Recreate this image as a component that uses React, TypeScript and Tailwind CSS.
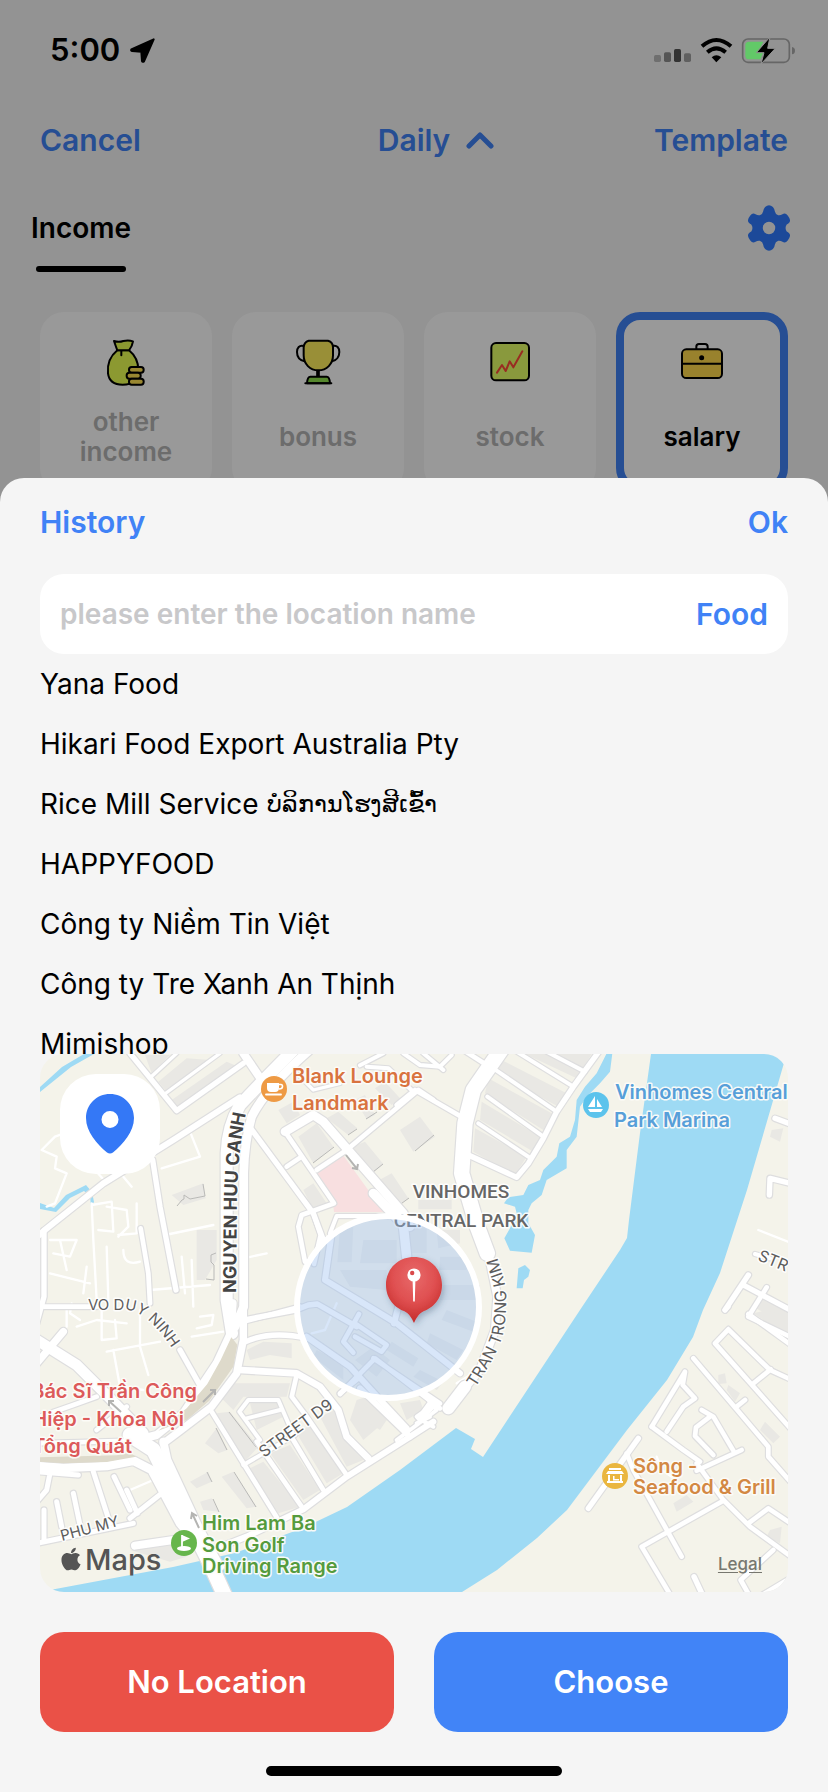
import React from "react";
import { FaApple } from "react-icons/fa";

type Road = [path: string, width: number];

interface Tile {
  x: number;
  y: number;
  buildings: string[];
  roads: Road[];
  lanes: string[];
}

/* Each tile is drawn at three units per map pixel, from its own origin. */
const tiles: Tile[] = [
  {
    x: 30,
    y: 1040,
    buildings: [
      "M345 45H420L365 100Z",
      "M385 125L470 55L540 60L410 155Z",
      "M425 180L590 65L625 80L445 205Z",
      "M425 465L520 430L527 475L460 495Z",
      "M500 570H560V660L525 720H500Z",
      "M805 290L860 250L910 320L850 370Z",
      "M890 235L925 215L982 265L955 285Z",
      "M968 320L1005 305L1060 372L1030 398Z",
      "M1048 420L1085 400L1135 475L1105 497Z",
      "M820 450L850 430L890 490L850 510Z",
      "M975 180L1005 165L1035 225L1010 238Z",
      "M1035 145L1065 125L1110 175L1085 195Z",
      "M745 210L790 185L810 225L770 250Z",
    ],
    roads: [
      ["M800 20Q700 120 630 195Q592 260 590 340V780L606 880", 36],
      ["M850 20Q710 140 665 230Q644 300 641 400V800L615 860", 26],
      ["M20 592L42 572L220 430L430 300L630 172", 18],
      ["M42 572V770L20 850", 16],
      ["M42 800H200", 14],
      ["M368 360L390 500L438 750", 16],
      ["M332 565L355 700L360 790", 14],
      ["M300 40L440 212L640 70", 16],
      ["M362 112L440 40M400 165L570 40", 10],
      ["M640 40L700 128", 24],
      ["M660 262L850 520L880 600", 16],
      ["M770 380L815 350M860 390L950 330L1165 150L1210 180", 14],
      ["M765 275L850 225L880 245L1120 520L1140 560", 26],
      ["M765 275L912 490L815 525L805 560L825 665", 14],
      ["M850 520L872 585L852 672", 14],
      ["M990 76L1060 40M1010 80L1075 85L1150 155M1180 40L1240 90", 12],
      ["M640 845L810 800", 14],
      ["M800 100L850 150L930 130", 10],
    ],
    lanes: [
      "M35 330L75 290L130 270M35 330L80 350L75 385L110 400L75 490L50 500",
      "M200 395L230 430M280 410L305 440",
      "M480 275L510 350L395 385",
      "M185 490L190 600L200 780M185 495L245 485L250 575L205 570M230 500L290 510L295 560L265 590",
      "M320 490V580L265 585M60 600L140 600L120 650L70 640M60 700L180 730M90 600L110 690M230 620L235 780",
      "M280 630Q280 680 330 665M405 585L550 555M640 655L710 640M455 650L465 760M485 660L490 800M360 750L540 735",
      "M110 810V860M160 760L170 680M140 860L200 840L290 850",
    ],
  },
  {
    x: 400,
    y: 1040,
    buildings: [
      "M305 60L510 165L475 200L285 95Z",
      "M265 115L455 220L430 270L255 160Z",
      "M245 185L420 290L400 335L240 240Z",
      "M225 265L380 350L345 405L220 335Z",
      "M375 42H575L530 115Z",
      "M0 270L60 230L105 290L40 335Z",
      "M55 480L155 480V508H55Z",
      "M1115 270L1150 265L1140 305L1110 290Z",
      "M1060 800L1100 770L1164 800V860Z",
    ],
    roads: [
      ["M310 20L220 150L195 250L185 400L232 560L262 640", 46],
      ["M600 30L520 140L470 215L430 295L385 370L350 412L205 345", 16],
      ["M350 35L520 140M280 85L470 215M262 170L430 290M235 250L388 352M440 35L555 95", 12],
      ["M190 30L260 75", 14],
      ["M-10 195L45 150L180 228", 14],
      ["M10 40L60 75L120 80L155 45", 12],
      ["M1125 235L1180 255M1108 465L1110 415L1180 432", 16],
      ["M975 810L1045 705M1030 735L1180 815", 16],
      ["M1100 742L1045 830L1180 895", 14],
      ["M1065 642L1110 655", 12],
    ],
    lanes: ["M1075 570L1164 605"],
  },
  {
    x: 30,
    y: 1310,
    buildings: [
      "M650 120L700 95L785 100V145L720 135L660 150Z",
      "M600 220H780L770 260H640L610 300L570 260Z",
      "M560 310L600 305L685 410L640 460Z",
      "M525 400L560 355L592 420L565 430Z",
      "M480 515L535 485L545 515L500 535Z",
      "M575 500L610 485L680 590L650 595Z",
      "M510 575L545 565L567 605L520 600Z",
      "M650 480L700 455L810 590L745 610Z",
      "M720 430L780 405L870 540L820 570Z",
      "M800 370L850 340L940 490L890 520Z",
      "M870 320L915 300L1000 450L950 470Z",
      "M980 270L1010 260L1070 330L1000 390L960 330Z",
      "M660 280L740 275L760 320L680 360Z",
      "M300 720L430 700L470 740L420 755Z",
    ],
    roads: [
      ["M608 -20L602 70L560 160L520 220L460 310L380 375L340 385", 24],
      ["M640 -20V90L620 190L545 290L440 370L400 400", 22],
      ["M100 65L20 160", 22],
      ["M20 90L140 165L240 265L340 370", 32],
      ["M300 375L370 420L440 560L540 760L590 870", 44],
      ["M400 395L412 450L510 660L570 770", 24],
      ["M20 468L100 474L230 468L310 452L365 480L450 640L500 700", 26],
      ["M20 400L310 392M30 320L130 285L200 260M200 360L290 290", 14],
      ["M450 120L515 235", 16],
      ["M640 30L800 0M640 98Q720 60 830 85", 16],
      ["M630 180L800 190L870 230L925 300L950 380L1015 445", 20],
      ["M800 195L785 260L830 320L950 495", 14],
      ["M790 390L880 540M680 395L815 590M545 305L740 622", 14],
      ["M560 715L650 680L820 598L950 500L1140 380L1210 335", 18],
      ["M640 465L795 375M790 375L745 270H655L628 305L690 390M650 325L750 300", 12],
      ["M930 250L985 205", 14],
      ["M990 235L1140 380", 18],
      ["M1210 350L1165 325L1205 270", 12],
      ["M80 575L95 650M130 550L150 645M190 485L240 640M252 500L300 600M290 540L322 610M300 625L395 550", 15],
      ["M20 485L145 495M60 490L50 540L20 575M42 600V690", 15],
      ["M20 700L310 640", 15],
      ["M315 707L430 690", 24],
    ],
    lanes: [
      "M215 0V90L260 85L255 30M150 30L120 10L125 -20M230 125L390 95M250 120L270 230L340 240M330 0V110L355 195",
      "M485 80L580 65M510 20L550 15L545 45L500 55M300 540L370 510",
    ],
  },
  {
    x: 400,
    y: 1310,
    buildings: [
      "M1060 10L1100 0L1164 20V80Z",
      "M955 195L975 190L980 220L955 222Z",
      "M985 225L1020 250L1005 275L980 240Z",
      "M1095 335L1140 380L1120 400L1080 360Z",
      "M820 580L860 555L880 575L830 605Z",
      "M1110 660L1145 650L1140 700L1100 680Z",
      "M0 280L60 270L70 300L20 330Z",
    ],
    roads: [
      ["M-10 390L110 300L70 250M50 340L90 320", 12],
      ["M565 595L715 385", 16],
      ["M680 430L700 480L745 560L845 740", 14],
      ["M725 710L970 572M725 710L820 870", 14],
      ["M890 460L970 570L1050 650L1180 745", 14],
      ["M1045 640L1105 595L1180 645M1120 720L1022 810L1050 860", 14],
      ["M1080 860L1180 800M882 800L910 860", 16],
      ["M755 350L855 185L848 225L885 265L850 290L800 365", 14],
      ["M755 350L850 420L900 455", 14],
      ["M905 300L940 320L1000 422M930 320L888 352L885 378L940 435M890 482L1025 420", 14],
      ["M880 145L1105 410V440L1180 525M1010 290L1035 270", 14],
      ["M985 58L1110 180L1180 212M985 58L945 100L1180 365M1058 222L1112 178", 14],
      ["M1045 12L1180 110M975 0L985 -10", 14],
    ],
    lanes: ["M770 440L785 480L830 510"],
  },
  {
    x: 240,
    y: 1190,
    buildings: [
      "M300 110L340 105L335 217H292Z",
      "M370 150L470 150V220H360Z",
      "M300 240L440 240V300L330 290Z",
      "M590 120H660V160L595 175Z",
      "M600 200H680V240H598Z",
      "M610 285H720V330H600Z",
      "M620 360L710 395L700 425L605 390Z",
      "M570 430L670 480L650 510L560 460Z",
      "M455 455L535 505L520 530L440 480Z",
      "M540 540L610 575L590 600L520 560Z",
      "M230 480L310 520V570L220 500Z",
      "M490 110H560V190H510Z",
      "M345 510L400 470L450 510L410 560Z",
      "M360 640L440 690L420 720L340 670Z",
    ],
    roads: [
      ["M690 90L745 190L772 320L765 420L720 540L660 610", 24],
      ["M675 590L625 655", 36],
      ["M275 130L255 270L470 400L660 550", 18],
      ["M180 355L205 345L232 342L350 410", 16],
      ["M357 372L310 455L340 488M345 400L440 465L425 485L345 440", 14],
      ["M200 440L330 530L430 640L500 715", 18],
      ["M300 612L405 505L600 655M400 505L600 640", 14],
      ["M400 10L490 105L500 200", 28],
      ["M462 400L475 350", 18],
      ["M270 130L290 78H470", 12],
      ["M590 640L540 690L530 680L580 645", 12],
    ],
    lanes: ["M290 340L255 420L215 430M700 550L650 580"],
  },
];

const oneWayArrows = [
  "M346 1155L357 1169M352 1168L357 1169L358 1164",
  "M203 1402L215 1390M210 1390H215V1395",
  "M121 1412L109 1401M114 1401H109V1406",
  "M199 1528L192 1513M191 1519L192 1513L197 1516",
];

function MapCanvas() {
  const at = (t: Tile) => `translate(${t.x} ${t.y}) scale(${1 / 3})`;
  return (
    <svg
      viewBox="40 1054 748 538"
      preserveAspectRatio="xMidYMid slice"
      className="block size-full font-['Inter',sans-serif]"
      role="img"
      aria-label="Map of Vinhomes Central Park"
    >
      <defs>
        <radialGradient id="pinShade" cx="50%" cy="30%" r="65%">
          <stop offset="0" stopColor="#e8696a" />
          <stop offset="0.6" stopColor="#df4f50" />
          <stop offset="1" stopColor="#c8302f" />
        </radialGradient>
        <filter id="pinShadow" x="-40%" y="-40%" width="180%" height="180%">
          <feDropShadow dx="2" dy="3" stdDeviation="3" floodColor="#35506b" floodOpacity="0.35" />
        </filter>
        <path id="nhcLine" d="M236 1293L237 1200Q238 1140 250 1098" />
        <path id="ttkLine" d="M475 1388Q497 1355 503 1335Q510 1295 502 1273L486 1222" />
        <path id="vdnLine" d="M88 1310H128Q152 1313 182 1364" />
      </defs>

      <rect x="40" y="1054" width="748" height="538" fill="#f4f3ea" />
      <path d="M316 1173L343 1155L384 1212L334 1212L333 1203Z" fill="#f8dfe0" />

      <g fill="#e9e8e4">
        {tiles.map((t) => (
          <g key={`${t.x}-${t.y}`} transform={at(t)}>
            <path d={t.buildings.join("")} />
          </g>
        ))}
      </g>
      <g fill="none" stroke="#b9b9b7" strokeWidth="1">
        <path d="M313 1163L334 1147M348 1135L357 1129M373 1172L383 1164M398 1206L409 1198M177 1206L182 1200L184 1199V1195L190 1199L205 1196L203 1184M216 1253L211 1255V1262L214 1265V1280L206 1279M366 1119L377 1112" />
        <path d="M229 1412L256 1447M216 1428L227 1450M207 1472L212 1482M234 1472L256 1507M213 1499L219 1512M415 1151L434 1135" />
      </g>

      <g fill="#9edaf4">
        <path d="M651 1054L640 1133L629 1220L627 1238L620 1250L580 1310L483 1457L471 1449L475 1439L456 1428L400 1470L347 1507L303 1528L235 1553L173 1567L50 1590V1600H450L462 1592L497 1570L537 1538L567 1510L597 1470L627 1430L667 1380L693 1337L703 1310L720 1273L747 1190L784 1063V1054Z" />
        <path
          transform="translate(400 1040) scale(0.33333)"
          d="M637 40L630 95L600 130L560 170L540 200L530 290L500 330V385L440 420L425 465L395 490L385 510V550L405 585L395 638L330 632L313 595L330 565L350 520L345 500L312 490L325 472L370 465L385 435L420 420L430 390L470 350L478 310L510 290L525 240L530 180L555 140L590 100L610 60L620 40ZM355 685L375 675L390 690L385 710L372 720L368 745H350Z"
        />
        <path d="M40 1087L62 1067L84 1054H94L71 1067L40 1092ZM40 1203L54 1208L66 1195L86 1185L92 1192L94 1202L91 1206L90 1196L84 1191L70 1198L56 1212L40 1209Z" />
      </g>

      <g fill="none" strokeLinecap="round" strokeLinejoin="round">
        {tiles.map((t) => (
          <g key={`lane-${t.x}-${t.y}`} transform={at(t)} stroke="#ffffff" strokeWidth="7">
            <path d={t.lanes.join("")} />
          </g>
        ))}
        {tiles.map((t) => (
          <g key={`case-${t.x}-${t.y}`} transform={at(t)} stroke="#dededf">
            {t.roads.map(([d, w]) => (
              <path key={d} d={d} strokeWidth={w + 7} />
            ))}
          </g>
        ))}
        {tiles.map((t) => (
          <g key={`road-${t.x}-${t.y}`} transform={at(t)} stroke="#ffffff">
            {t.roads.map(([d, w]) => (
              <path key={d} d={d} strokeWidth={w} />
            ))}
          </g>
        ))}
      </g>
      <path
        transform="translate(30 1310) scale(0.33333)"
        d="M604 82L622 104L610 170L538 272L470 330L385 362L470 295L532 222L572 150ZM30 442L260 436L300 428L318 440L230 456L100 460L30 455Z"
        fill="#dedacb"
      />
      <path d={oneWayArrows.join("")} fill="none" stroke="#b4b4b2" strokeWidth="2" />

      {/* Street and district names */}
      <g
        fill="#5c5c5c"
        stroke="#ffffff"
        strokeOpacity="0.9"
        strokeWidth="3"
        strokeLinejoin="round"
        paintOrder="stroke"
      >
        <text fontSize="18" fontWeight="700" fill="#444444">
          <textPath href="#nhcLine">NGUYEN HUU CANH</textPath>
        </text>
        <text fontSize="16">
          <textPath href="#ttkLine">TRAN TRONG KIM</textPath>
        </text>
        <text fontSize="15">
          <textPath href="#vdnLine">VO DUY NINH</textPath>
        </text>
        <text fontSize="16" transform="translate(264 1458) rotate(-36)">STREET D9</text>
        <text fontSize="15" transform="translate(62 1541) rotate(-15)">PHU MY</text>
        <text fontSize="16" transform="translate(757 1260) rotate(22)">STR</text>
        <g className="font-['Roboto',sans-serif]" fontSize="19" fontWeight="500" textAnchor="middle" fill="#666666">
          <text x="461" y="1198">VINHOMES</text>
          <text x="461" y="1227">CENTRAL PARK</text>
        </g>
      </g>

      {/* Selected area */}
      <circle cx="388" cy="1307" r="91" fill="#98bdf0" fillOpacity="0.38" stroke="#ffffff" strokeWidth="6" />
      <g filter="url(#pinShadow)">
        <path
          d="M414 1257C430 1257 442 1269 442 1285C442 1300 432 1308 424 1311C418 1314 416 1319 414 1323C412 1319 410 1314 404 1311C396 1308 386 1300 386 1285C386 1269 398 1257 414 1257Z"
          fill="url(#pinShade)"
        />
      </g>
      <path d="M412.6 1280H415.4L414.8 1301.500H413.200Z" fill="#ffffff" />
      <circle cx="414" cy="1275" r="6.600" fill="#ffffff" />
      <circle cx="412.200" cy="1273" r="2.200" fill="#d9494a" />

      {/* Place markers */}
      <circle cx="274" cy="1089" r="13" fill="#ee9a44" />
      <path d="M267 1083H279V1088Q279 1092 275 1092H271Q267 1092 267 1088Z" fill="#ffffff" />
      <path d="M279 1084.500H281Q282.500 1084.500 282.500 1086.500Q282.500 1089 279 1089" fill="none" stroke="#ffffff" strokeWidth="1.600" />
      <path d="M266 1094.500H281" stroke="#ffffff" strokeWidth="1.800" strokeLinecap="round" />

      <circle cx="596" cy="1105" r="13" fill="#5cc3ec" />
      <path d="M595 1096V1107H588ZM597 1099L602 1107H597ZM588 1109H603L601 1112H590Z" fill="#ffffff" />

      <circle cx="184" cy="1543" r="13" fill="#67b64c" />
      <path d="M182 1535V1548" stroke="#ffffff" strokeWidth="1.800" />
      <path d="M182 1535L190 1538.500L182 1542Z" fill="#ffffff" />
      <ellipse cx="184" cy="1548.500" rx="7" ry="2.600" fill="#ffffff" />

      <circle cx="615" cy="1476" r="13" fill="#eab63f" />
      <path d="M609 1468H621V1470H609ZM608 1471H622L624 1474H606ZM608 1475H610V1481H608ZM620 1475H622V1481H620ZM613 1476H614.500V1479H619V1480.500H613ZM607 1481H623V1483H607Z" fill="#ffffff" />

      <g
        fontSize="20"
        fontWeight="600"
        stroke="#fdfcf8"
        strokeOpacity="0.95"
        strokeWidth="3"
        strokeLinejoin="round"
        paintOrder="stroke"
      >
        <g fill="#d9733f">
          <text x="292" y="1083">Blank Lounge</text>
          <text x="292" y="1110">Landmark</text>
        </g>
        <g fill="#579fd9">
          <text x="615" y="1099">Vinhomes Central</text>
          <text x="614" y="1127">Park Marina</text>
        </g>
        <g fill="#dc5a5a" textAnchor="end">
          <text x="197" y="1398">Bác Sĩ Trần Công</text>
          <text x="184" y="1426">Hiệp - Khoa Nội</text>
          <text x="132" y="1453">Tổng Quát</text>
        </g>
        <g fill="#559b3d">
          <text x="202" y="1530">Him Lam Ba</text>
          <text x="202" y="1552">Son Golf</text>
          <text x="202" y="1573">Driving Range</text>
        </g>
        <g fill="#d38843">
          <text x="633" y="1473">Sông -</text>
          <text x="633" y="1494">Seafood &amp; Grill</text>
        </g>
      </g>

      <FaApple x={58} y={1546} size={26} color="#555555" />
      <text x="85" y="1570" fontSize="29" fontWeight="500" fill="#555555">Maps</text>
    </svg>
  );
}

function BagIcon() {
  return (
    <svg viewBox="306 144 144 144" className="size-12" fill="#e9ff53" stroke="#000" strokeWidth="6" strokeLinejoin="round" strokeLinecap="round">
      <path d="M352 181C325 203 322 230 324 250C327 274 343 284 368 284C396 284 414 274 415 240C415 215 404 195 387 181Z" />
      <path d="M342 153Q356 158 370 153Q386 150 399 154Q397 168 387 181H352Q347 168 342 153Z" />
      <path d="M364 183V196" />
      <g fill="#ffe153">
        <rect x="387" y="231" width="44" height="17" rx="8" />
        <rect x="380" y="248" width="42" height="18" rx="8" />
        <rect x="387" y="266" width="44" height="18" rx="8" />
      </g>
    </svg>
  );
}

function TrophyIcon() {
  return (
    <svg viewBox="882 144 144 144" className="size-12" fill="none" stroke="#000" strokeWidth="6" strokeLinejoin="round" strokeLinecap="round">
      <path d="M911 168C898 164 891 174 891 186C891 200 900 211 914 214M998 168C1011 164 1018 174 1018 186C1018 200 1009 211 996 214" />
      <path d="M954 242V260" strokeWidth="11" />
      <path d="M926 152H984Q999 156 999 172V196C999 222 980 241 955 241C930 241 911 222 911 196V172Q912 156 926 152Z" fill="#ffee5c" />
      <path d="M921 280Q922 260 931 260H980Q989 260 990 280Z" fill="#8ee14b" />
      <path d="M916 280H994" />
    </svg>
  );
}

function StockIcon() {
  return (
    <svg viewBox="216 144 144 144" className="size-12" fill="none" strokeLinejoin="round" strokeLinecap="round">
      <rect x="232" y="159" width="113" height="112" rx="14" fill="#e4ff67" stroke="#000" strokeWidth="6" />
      <path d="M249 248L264 225L275 243L287 214L298 232L325 184" stroke="#ff4a38" strokeWidth="6" />
    </svg>
  );
}

function BriefcaseIcon() {
  return (
    <svg viewBox="792 144 144 144" className="size-12" fill="none" stroke="#000" strokeWidth="6" strokeLinejoin="round">
      <path d="M847 178V170Q847 162 855 162H873Q881 162 881 170V178" />
      <rect x="804" y="178" width="120" height="86" rx="13" fill="#ffd94b" />
      <path d="M804 221H924" />
      <circle cx="863" cy="203" r="4.500" fill="#000" />
    </svg>
  );
}

function GearIcon() {
  return (
    <svg viewBox="440 554 128 140" className="h-[46px] w-[42px]" fill="#2f7bff" fillRule="evenodd">
      <path d="M492 560Q504 550 516 560Q521 566 522 574Q523 582 532 585Q539 586 545 582Q554 576 561 586Q572 600 566 607Q562 611 558 613Q551 624 558 635Q562 637 566 641Q572 648 561 662Q554 672 545 666Q539 662 532 663Q523 666 522 674Q521 682 516 688Q504 698 492 688Q487 682 486 674Q485 666 476 663Q469 662 463 666Q454 672 447 662Q436 648 442 641Q446 637 450 635Q457 624 450 613Q446 611 442 607Q436 600 447 586Q454 576 463 582Q469 586 476 585Q485 582 486 574Q487 566 492 560ZM504 605A19 19 0 1 0 504 643A19 19 0 1 0 504 605Z" />
    </svg>
  );
}

const categories = [
  { name: "other income", icon: <BagIcon />, selected: false },
  { name: "bonus", icon: <TrophyIcon />, selected: false },
  { name: "stock", icon: <StockIcon />, selected: false },
  { name: "salary", icon: <BriefcaseIcon />, selected: true },
];

const places: { name: string; localName?: string }[] = [
  { name: "Yana Food" },
  { name: "Hikari Food Export Australia Pty" },
  { name: "Rice Mill Service", localName: "ບໍລິການໂຮງສີເຂົ້າ" },
  { name: "HAPPYFOOD" },
  { name: "Công ty Niềm Tin Việt" },
  { name: "Công ty Tre Xanh An Thịnh" },
  { name: "Mimishop" },
];

function StatusBar() {
  return (
    <div className="relative z-10 flex h-[100px] items-center justify-between pr-8 pl-[50px]">
      <div className="flex items-center gap-2.5">
        <span className="text-[31px] leading-10 font-semibold">5:00</span>
        <svg viewBox="386 52 75 75" className="size-[25px]" stroke="#000" strokeWidth="6" strokeLinejoin="round">
          <path d="M457 56L390 86Q388 90 392 91L420 93L422 121Q424 125 428 122Z" />
        </svg>
      </div>
      <svg viewBox="156 48 429 81" className="h-[27px] w-[143px]" fill="none">
        <rect x="159" y="102" width="21" height="21" rx="5" fill="#6f6f6f" />
        <rect x="189" y="94" width="21" height="29" rx="5" fill="#555" />
        <rect x="219" y="84" width="21" height="39" rx="5" fill="#333" />
        <rect x="249" y="97" width="21" height="26" rx="5" fill="#606060" />
        <g stroke="#000" strokeWidth="12">
          <path d="M303 76Q346 38 390 76" />
          <path d="M319 94Q346 70 374 94" />
        </g>
        <path d="M332 109Q346 97 361 109L346 124Z" fill="#000" />
        <rect x="425" y="54" width="140" height="70" rx="16" stroke="#666" strokeWidth="5" />
        <path d="M573 78Q582 80 582 89Q582 98 573 100Z" fill="#666" />
        <path d="M444 62H487L470 94L486 96L478 115H444Q433 115 433 104V73Q433 62 444 62Z" fill="#62c968" />
        <path d="M507 48L466 95H489L480 129L523 82H500Z" fill="#000" stroke="#939393" strokeWidth="3" />
      </svg>
    </div>
  );
}

export default function App() {
  return (
    <div className="relative flex min-h-screen flex-col bg-[#f5f5f5] font-['Inter','Liberation_Sans',sans-serif] text-black">
      <div className="absolute inset-0 z-[5] bg-black/40" />

      <StatusBar />

      <header className="grid h-20 grid-cols-[1fr_auto_1fr] items-center px-10 text-[30px] leading-9 font-semibold text-[#4082f6]">
        <button type="button" className="justify-self-start">Cancel</button>
        <button type="button" className="-mr-11 flex items-center gap-4">
          Daily
          <svg viewBox="0 0 28 18" className="h-[18px] w-7" fill="none" stroke="currentColor" strokeWidth="5" strokeLinecap="round" strokeLinejoin="round">
            <path d="M3 15L14 4L25 15" />
          </svg>
        </button>
        <button type="button" className="justify-self-end">Template</button>
      </header>

      <div className="flex items-start justify-between pr-[38px] pl-[31px]">
        <button type="button" className="flex flex-col items-center pt-[31px]">
          <span className="text-[28px] leading-[34px] font-semibold">Income</span>
          <span className="mt-[21px] h-1.5 w-[90px] rounded-full bg-black" />
        </button>
        <button type="button" aria-label="Settings" className="mt-[25px]">
          <GearIcon />
        </button>
      </div>

      <div className="mt-10 grid grid-cols-4 gap-5 px-10">
        {categories.map((c) => (
          <button
            key={c.name}
            type="button"
            className={
              c.selected
                ? "flex h-[180px] flex-col items-center rounded-3xl border-8 border-[#4082f6] bg-white pt-[18px] text-black"
                : "flex h-[180px] flex-col items-center rounded-3xl bg-white pt-[26px] text-[#b4b4b4]"
            }
          >
            {c.icon}
            <span className="mt-[21px] flex h-[60px] w-28 items-center justify-center text-center text-[26px] leading-[30px] font-semibold">
              {c.name}
            </span>
          </button>
        ))}
      </div>

      <main className="relative z-10 -mt-3.5 flex flex-1 flex-col rounded-t-3xl bg-[#f5f5f5] px-10 pb-4">
        <div className="mb-2 flex h-[88px] items-center justify-between text-[30px] leading-9 font-semibold text-[#4082f6]">
          <button type="button">History</button>
          <button type="button">Ok</button>
        </div>

        <div className="flex h-20 items-center gap-4 rounded-3xl bg-white px-5">
          <input
            type="text"
            aria-label="Location name"
            placeholder="please enter the location name"
            className="min-w-0 flex-1 bg-transparent text-[28px] leading-9 font-semibold outline-none placeholder:text-[#c8c8ca]"
          />
          <button type="button" className="text-[30px] leading-9 font-semibold text-[#4082f6]">Food</button>
        </div>

        <ul className="h-[400px] overflow-hidden">
          {places.map((p) => (
            <li key={p.name}>
              <button type="button" className="flex h-[60px] w-full items-center gap-2 text-left text-[28px] leading-9">
                {p.name}
                {p.localName && <span className="text-2xl leading-9">{p.localName}</span>}
              </button>
            </li>
          ))}
        </ul>

        <div className="relative h-[538px] overflow-hidden rounded-3xl">
          <MapCanvas />
          <button
            type="button"
            aria-label="Current location"
            className="absolute top-5 left-5 flex size-[100px] items-center justify-center rounded-[36px] bg-white"
          >
            <svg viewBox="0 0 48 60" className="h-[60px] w-12" fill="#3478f6" fillRule="evenodd">
              <path d="M24 0C37.500 0 48 10.500 48 24C48 38 37 50 27 58.500Q24 60.500 21 58.500C11 50 0 38 0 24C0 10.500 10.500 0 24 0ZM24 17A8.500 8.500 0 1 0 24 34A8.500 8.500 0 1 0 24 17Z" />
            </svg>
          </button>
          <a href="#legal" className="absolute right-[26px] bottom-[18px] text-[17px] leading-5 font-medium text-[#77776f] underline underline-offset-2">
            Legal
          </a>
        </div>

        <div className="mt-10 grid grid-cols-2 gap-10 text-[31px] leading-9 font-semibold text-white">
          <button type="button" className="h-[100px] rounded-3xl bg-[#ea5147]">No Location</button>
          <button type="button" className="h-[100px] rounded-3xl bg-[#4184f7]">Choose</button>
        </div>

        <div className="mt-[34px] h-2.5 w-[296px] self-center rounded-full bg-black" />
      </main>
    </div>
  );
}
